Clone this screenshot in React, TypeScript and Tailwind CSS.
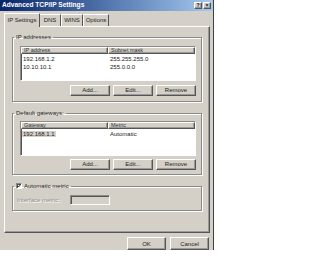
import React from "react";

const raised =
  "border border-t-white border-l-white border-r-[#555] border-b-[#555] shadow-[inset_-1px_-1px_0_#999] bg-[#d4d0c8]";
const sunken =
  "border border-t-[#8a8a8a] border-l-[#8a8a8a] border-r-white border-b-white shadow-[inset_1px_1px_0_#555]";

function Btn({ label }: { label: string }) {
  return (
    <div className={`${raised} w-[40px] h-[11px] flex items-center justify-center text-[6px] leading-none text-[#222]`}>
      {label}
    </div>
  );
}

function ListBox({ h1, h2, rows, selectFirst }: { h1: string; h2: string; rows: [string, string][]; selectFirst?: boolean }) {
  return (
    <div className={`${sunken} bg-white h-[35px] flex flex-col`}>
      <div className="flex h-[7px] text-[5.5px] leading-none text-[#333]">
        <div className={`${raised} w-[87px] h-[7px] pl-[2px] flex items-center`}>{h1}</div>
        <div className={`${raised} flex-1 h-[7px] pl-[2px] flex items-center`}>{h2}</div>
      </div>
      <div className="flex flex-col pt-[1px] text-[6px] leading-[8px] text-[#222]">
        {rows.map((r, i) => (
          <div key={i} className="flex">
            <div className="w-[87px] pl-[2px]">
              <span className={selectFirst && i === 0 ? "bg-[#d4d0c8] px-[1px] -ml-[1px]" : ""}>{r[0]}</span>
            </div>
            <div className="pl-[2px]">{r[1]}</div>
          </div>
        ))}
      </div>
    </div>
  );
}

function Group({ label, children, cls }: { label: React.ReactNode; children: React.ReactNode; cls?: string }) {
  return (
    <fieldset className={`border border-[#8a8a8a] shadow-[1px_1px_0_white,inset_1px_1px_0_white] pl-[7px] pr-[5px] m-0 ${cls ?? ""}`}>
      <legend className="text-[6px] leading-[7px] px-[2px] -ml-[6px] text-[#222]">{label}</legend>
      {children}
    </fieldset>
  );
}

export default function App() {
  return (
    <div className="w-[320px] h-[261px] bg-white overflow-hidden font-['Liberation_Sans',Arial,sans-serif]">
      <div className="w-[214px] h-[250px] bg-[#d4d0c8] border-r border-r-[#404040] flex flex-col overflow-hidden">
        {/* title bar */}
        <div className="h-[11px] bg-gradient-to-r from-[#0a246a] to-[#a6caf0] flex items-center pl-[2px] pr-[2px]">
          <span className="text-white font-bold text-[6.6px] leading-none flex-1">Advanced TCP/IP Settings</span>
          <div className={`${raised} w-[8px] h-[7px] flex items-center justify-center text-[5px] font-bold leading-none`}>?</div>
          <div className={`${raised} w-[8px] h-[7px] flex items-center justify-center text-[5px] font-bold leading-none ml-[1px]`}>×</div>
        </div>
        {/* tabs */}
        <div className="flex items-end h-[15px] pl-[4px] pt-[2px] text-[6px] leading-none text-[#222]">
          <div className="h-[14px] w-[36px] border-t border-l border-r border-t-white border-l-white border-r-[#555] flex items-center justify-center relative z-10 bg-[#d4d0c8] -mb-[1px]">IP Settings</div>
          <div className="h-[12px] w-[21px] border-t border-r border-t-white border-r-[#555] flex items-center justify-center">DNS</div>
          <div className="h-[12px] w-[22px] border-t border-l border-r border-t-white border-l-white border-r-[#555] flex items-center justify-center">WINS</div>
          <div className="h-[12px] w-[26px] border-t border-l border-r border-t-white border-l-white border-r-[#555] flex items-center justify-center">Options</div>
        </div>
        {/* panel */}
        <div className="ml-[4px] w-[206px] h-[209px] border border-t-white border-l-white border-r-[#555] border-b-[#555] shadow-[inset_-1px_-1px_0_#999] px-[7px] pt-[7px] flex flex-col">
          <Group label="IP addresses" cls="pb-[5px]">
            <div className="mt-[5px]">
              <ListBox h1="IP address" h2="Subnet mask" rows={[["192.168.1.2", "255.255.255.0"], ["10.10.10.1", "255.0.0.0"]]} />
            </div>
            <div className="flex justify-end gap-[3px] mt-[4px]">
              <Btn label="Add..." />
              <Btn label="Edit..." />
              <Btn label="Remove" />
            </div>
          </Group>
          <Group label="Default gateways:" cls="pb-[4px] mt-[8px]">
            <div className="mt-[4px]">
              <ListBox h1="Gateway" h2="Metric" rows={[["192.168.1.1", "Automatic"]]} selectFirst />
            </div>
            <div className="flex justify-end gap-[3px] mt-[3px]">
              <Btn label="Add..." />
              <Btn label="Edit..." />
              <Btn label="Remove" />
            </div>
          </Group>
          <Group
            cls="pb-[5px] mt-[8px]"
            label={
              <span className="flex items-center gap-[2px]">
                <span className={`${sunken} bg-white w-[6px] h-[6px] flex items-center justify-center`}>
                  <svg width="4" height="4" viewBox="0 0 7 7"><path d="M0.5 3 L2.5 5.2 L6.5 1" stroke="black" strokeWidth="1.6" fill="none" /></svg>
                </span>
                <span>Automatic metric</span>
              </span>
            }
          >
            <div className="flex items-center mt-[5px] -ml-[3px]">
              <span className="text-[6px] leading-none text-[#909090] [text-shadow:1px_1px_0_white] w-[53px]">Interface metric:</span>
              <div className={`${sunken} w-[40px] h-[10px] bg-[#d4d0c8]`} />
            </div>
          </Group>
        </div>
        {/* bottom buttons */}
        <div className="flex justify-end gap-[4px] pr-[4px] mt-[4px]">
          <div className={`${raised} w-[39px] h-[13px] flex items-center justify-center text-[6px] leading-none text-[#222]`}>OK</div>
          <div className={`${raised} w-[39px] h-[13px] flex items-center justify-center text-[6px] leading-none text-[#222]`}>Cancel</div>
        </div>
      </div>
    </div>
  );
}
